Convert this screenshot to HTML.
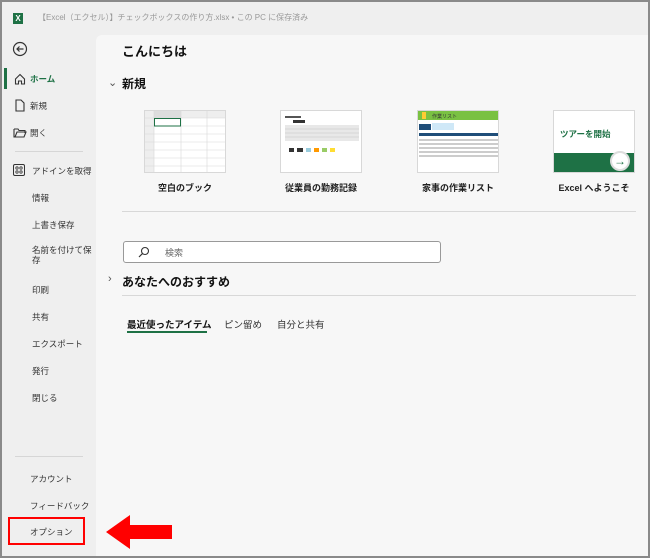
<!DOCTYPE html>
<html><head><meta charset="utf-8"><style>
*{margin:0;padding:0;box-sizing:border-box}
body{width:650px;height:558px;background:#8a8a8a;font-family:"Liberation Sans","Noto Sans CJK JP",sans-serif;position:relative;overflow:hidden;color:#222}
#win{position:absolute;left:2px;top:2px;width:646px;height:554px;background:#efefef}
.abs{position:absolute}
.t{position:absolute;font-size:8.5px;color:#333;white-space:nowrap}
#main{position:absolute;left:94px;top:33px;width:552px;height:521px;background:#f7f7f7;border-top-left-radius:6px}
.thumb{position:absolute;top:75px;width:82px;height:63px;background:#fff;border:1px solid #d8d8d8;overflow:hidden}
.lab{position:absolute;top:146px;font-size:9px;font-weight:bold;color:#222;text-align:center;width:120px}
</style></head><body>
<div id="win">
 <div class="abs" style="left:11px;top:11px;width:10px;height:11px;background:#1e7145;color:#fff;font-size:8px;font-weight:bold;text-align:center;line-height:11px">X</div>
 <div class="t" style="left:36px;top:10px;font-size:8px;color:#999">【Excel（エクセル）】チェックボックスの作り方.xlsx • この PC に保存済み</div>
 <svg class="abs" style="left:10px;top:39px" width="16" height="16"><circle cx="8" cy="8" r="6.5" fill="none" stroke="#333" stroke-width="1.2"/><path d="M11.5 8H5M7.5 5.5L5 8l2.5 2.5" fill="none" stroke="#333" stroke-width="1.2"/></svg>
 <div class="abs" style="left:2px;top:66px;width:3px;height:21px;background:#1e7145"></div>
 <svg class="abs" style="left:12px;top:71px" width="12" height="12"><path d="M1.5 6L6 1.5 10.5 6V11H7.5V8h-3v3H1.5z" fill="none" stroke="#333" stroke-width="1.1"/></svg>
 <div class="t" style="left:28px;top:71px;color:#1e7145;font-weight:bold">ホーム</div>
 <svg class="abs" style="left:12px;top:97px" width="12" height="13"><path d="M2 1h5l3 3v8H2z" fill="none" stroke="#333" stroke-width="1.1"/></svg>
 <div class="t" style="left:28px;top:98px">新規</div>
 <svg class="abs" style="left:11px;top:125px" width="14" height="12"><path d="M1 2h4l1 1.5h6V6M1 2v8h10l2-5H4l-2 5" fill="none" stroke="#333" stroke-width="1.1"/></svg>
 <div class="t" style="left:28px;top:125px">開く</div>
 <div class="abs" style="left:13px;top:149px;width:68px;height:1px;background:#d6d6d6"></div>
 <svg class="abs" style="left:11px;top:162px" width="12" height="12"><rect x="0.5" y="0.5" width="11" height="11" rx="1.5" fill="none" stroke="#333"/><circle cx="4" cy="4" r="1.2" fill="none" stroke="#333" stroke-width=".8"/><circle cx="8" cy="4" r="1.2" fill="none" stroke="#333" stroke-width=".8"/><circle cx="4" cy="8" r="1.2" fill="none" stroke="#333" stroke-width=".8"/><circle cx="8" cy="8" r="1.2" fill="none" stroke="#333" stroke-width=".8"/></svg>
 <div class="t" style="left:30px;top:163px">アドインを取得</div>
 <div class="t" style="left:30px;top:190px">情報</div>
 <div class="t" style="left:30px;top:217px">上書き保存</div>
 <div class="t" style="left:30px;top:243px;line-height:10px">名前を付けて保<br>存</div>
 <div class="t" style="left:30px;top:282px">印刷</div>
 <div class="t" style="left:30px;top:309px">共有</div>
 <div class="t" style="left:30px;top:336px">エクスポート</div>
 <div class="t" style="left:30px;top:363px">発行</div>
 <div class="t" style="left:30px;top:390px">閉じる</div>
 <div class="abs" style="left:13px;top:454px;width:68px;height:1px;background:#d6d6d6"></div>
 <div class="t" style="left:28px;top:471px">アカウント</div>
 <div class="t" style="left:28px;top:498px">フィードバック</div>
 <div class="abs" style="left:6px;top:515px;width:77px;height:28px;border:2px solid #f00"></div>
 <div class="t" style="left:28px;top:524px">オプション</div>
 <div id="main">
  <div class="t" style="left:26px;top:6px;font-size:13px;font-weight:bold;color:#111">こんにちは</div>
  <div class="t" style="left:12px;top:41px;font-size:11px;color:#555">⌄</div>
  <div class="t" style="left:26px;top:40px;font-size:12px;font-weight:bold;color:#111">新規</div>
  <div class="thumb" style="left:48px">
   <svg width="82" height="63"><rect width="82" height="7" fill="#eee"/><rect width="9" height="63" fill="#eee"/><rect x="9" width="27" height="7" fill="#ddd"/><path d="M9 0V63M36 0V63M62 0V63M0 7H82M0 15H82M0 23H82M0 31H82M0 39H82M0 47H82M0 55H82" stroke="#d8d8d8" stroke-width=".6"/><rect x="9.5" y="7.5" width="26" height="7.5" fill="none" stroke="#1e7145" stroke-width="1"/></svg>
  </div>
  <div class="thumb" style="left:184px">
   <svg width="82" height="63"><rect x="4" y="5" width="16" height="2" fill="#555"/><rect x="12" y="9" width="12" height="3" fill="#333"/><rect x="4" y="14" width="74" height="16" fill="#e8e8e8"/><path d="M4 18H78M4 22H78M4 26H78" stroke="#bbb" stroke-width=".4"/><rect x="8" y="37" width="5" height="4" fill="#333"/><rect x="16" y="37" width="6" height="4" fill="#333"/><rect x="25" y="37" width="5" height="4" fill="#9cd"/><rect x="33" y="37" width="5" height="4" fill="#f90"/><rect x="41" y="37" width="5" height="4" fill="#9c6"/><rect x="49" y="37" width="5" height="4" fill="#fd3"/></svg>
  </div>
  <div class="thumb" style="left:321px">
   <svg width="82" height="63"><rect width="82" height="9" fill="#7ac142"/><rect x="4" y="1" width="4" height="7" fill="#fc3"/><text x="14" y="7" font-size="5" fill="#333">作業リスト</text><rect x="1" y="13" width="12" height="6" fill="#1f4e79"/><rect x="14" y="12" width="22" height="7" fill="#cfe8f7"/><rect x="1" y="22" width="80" height="3" fill="#1f4e79"/><path d="M1 29H81M1 33H81M1 37H81M1 41H81M1 45H81" stroke="#ccc" stroke-width="2"/></svg>
  </div>
  <div class="thumb" style="left:457px">
   <div class="abs" style="left:6px;top:17px;font-size:8.5px;color:#1e7145;font-weight:bold">ツアーを開始</div>
   <div class="abs" style="left:0;top:42px;width:80px;height:20px;background:#1e7145"></div>
   <div class="abs" style="left:56px;top:40px;width:20px;height:20px;border-radius:50%;background:#fff;border:2px solid #ddd;font-size:12px;font-weight:bold;text-align:center;line-height:16px;color:#1e7145">→</div>
  </div>
  <div class="lab" style="left:29px">空白のブック</div>
  <div class="lab" style="left:165px">従業員の勤務記録</div>
  <div class="lab" style="left:302px">家事の作業リスト</div>
  <div class="lab" style="left:438px">Excel へようこそ</div>
  <div class="abs" style="left:26px;top:176px;width:514px;height:1px;background:#d8d8d8"></div>
  <div class="abs" style="left:27px;top:206px;width:318px;height:22px;background:#fff;border:1px solid #999;border-radius:3px"></div>
  <svg class="abs" style="left:42px;top:211px" width="12" height="12"><circle cx="7" cy="5" r="3.5" fill="none" stroke="#333" stroke-width="1.1"/><path d="M4.5 7.5L1 11" stroke="#333" stroke-width="1.2"/></svg>
  <div class="t" style="left:69px;top:211px;color:#666;font-size:9px">検索</div>
  <div class="t" style="left:12px;top:238px;font-size:11px;color:#555">›</div>
  <div class="t" style="left:26px;top:238px;font-size:12px;font-weight:bold;color:#111">あなたへのおすすめ</div>
  <div class="abs" style="left:26px;top:260px;width:514px;height:1px;background:#d8d8d8"></div>
  <div class="t" style="left:31px;top:282px;font-size:9.5px;font-weight:bold;color:#111">最近使ったアイテム</div>
  <div class="abs" style="left:31px;top:296px;width:80px;height:2px;background:#1e7145"></div>
  <div class="t" style="left:128px;top:282px;font-size:9.5px">ピン留め</div>
  <div class="t" style="left:181px;top:282px;font-size:9.5px">自分と共有</div>
 </div>
 <svg class="abs" style="left:104px;top:513px" width="66" height="34"><path d="M0 17L24 0V10H66V24H24V34z" fill="#f00"/></svg>
</div>
</body></html>
